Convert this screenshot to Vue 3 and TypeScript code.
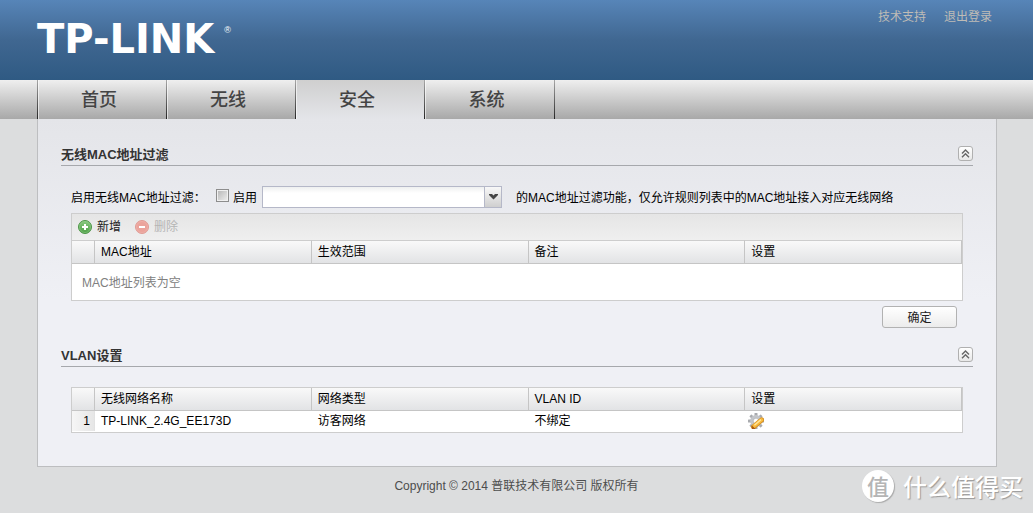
<script setup lang="ts">
import { ref } from 'vue'

const tabs: string[] = ['首页', '无线', '安全', '系统']
const activeTab = ref('安全')
const filterEnabled = ref(false)
const filterNetwork = ref('')
const filterOpen = ref(true)
const vlanOpen = ref(true)

interface VlanRow {
  name: string
  type: string
  vlan: string
}

const macColumns: string[] = ['MAC地址', '生效范围', '备注', '设置']
const vlanColumns: string[] = ['无线网络名称', '网络类型', 'VLAN ID', '设置']
const vlanRows: VlanRow[] = [{ name: 'TP-LINK_2.4G_EE173D', type: '访客网络', vlan: '不绑定' }]
const gearTeeth: number[] = [0, 45, 90, 135, 180, 225, 270, 315]
</script>

<template>
  <div class="page">
    <header class="banner">
      <div class="logo">TP-LINK<span class="reg">®</span></div>
      <div class="links">
        <a href="#support">技术支持</a>
        <a href="#logout">退出登录</a>
      </div>
    </header>

    <nav class="nav">
      <button
        v-for="tab in tabs"
        :key="tab"
        type="button"
        class="tab"
        :class="{ active: tab === activeTab }"
        @click="activeTab = tab"
      >
        {{ tab }}
      </button>
    </nav>

    <main class="panel">
      <section>
        <div class="section-head">
          <h2>无线MAC地址过滤</h2>
          <button type="button" class="collapse" aria-label="收起" @click="filterOpen = !filterOpen">
            <svg width="9" height="9" viewBox="0 0 9 9"><path d="M1 4.5 4.5 1 8 4.5M1 8.2 4.5 4.7 8 8.2" /></svg>
          </button>
        </div>
        <div v-show="filterOpen" class="section-body">
          <div class="filter-row">
            <span class="filter-label">启用无线MAC地址过滤：</span>
            <input id="filter-on" v-model="filterEnabled" type="checkbox" class="check" />
            <label for="filter-on" class="check-label">启用</label>
            <span class="combo">
              <select v-model="filterNetwork" aria-label="无线网络">
                <option value=""></option>
                <option value="guest">TP-LINK_2.4G_EE173D</option>
              </select>
              <span class="combo-arrow">
                <svg width="9" height="6" viewBox="0 0 9 6"><path d="M0 0h3l1.5 1.5L6 0h3v1L4.5 5.5 0 1z" /></svg>
              </span>
            </span>
            <span class="filter-note">的MAC地址过滤功能，仅允许规则列表中的MAC地址接入对应无线网络</span>
          </div>

          <div class="grid">
            <div class="toolbar">
              <button type="button" class="tool">
                <svg width="14" height="14" viewBox="0 0 14 14">
                  <defs>
                    <linearGradient id="add-fill" x1="0" y1="0" x2="0" y2="1">
                      <stop offset="0" stop-color="#8ccb83" />
                      <stop offset="1" stop-color="#4a9d43" />
                    </linearGradient>
                  </defs>
                  <circle cx="7" cy="7" r="6.5" fill="url(#add-fill)" stroke="#4d9447" />
                  <circle cx="7" cy="7" r="5.5" fill="none" stroke="#8fcb87" stroke-width=".6" />
                  <path d="M7 4v6M4 7h6" stroke="#fff" stroke-width="2" />
                </svg>
                新增
              </button>
              <button type="button" class="tool" disabled>
                <svg width="14" height="14" viewBox="0 0 14 14">
                  <circle cx="7" cy="7" r="6.5" fill="#eba39b" stroke="#df9c95" />
                  <circle cx="7" cy="7" r="5.5" fill="none" stroke="#f0b5ae" stroke-width=".6" />
                  <path d="M4 7h6" stroke="#fff" stroke-width="2" />
                </svg>
                删除
              </button>
            </div>
            <table class="under-toolbar">
              <thead>
                <tr>
                  <th class="num"></th>
                  <th v-for="c in macColumns" :key="c">{{ c }}</th>
                </tr>
              </thead>
              <tbody>
                <tr>
                  <td colspan="5" class="empty">MAC地址列表为空</td>
                </tr>
              </tbody>
            </table>
          </div>
          <div class="actions">
            <button type="button" class="confirm">确定</button>
          </div>
        </div>
      </section>

      <section>
        <div class="section-head vlan-head">
          <h2>VLAN设置</h2>
          <button type="button" class="collapse" aria-label="收起" @click="vlanOpen = !vlanOpen">
            <svg width="9" height="9" viewBox="0 0 9 9"><path d="M1 4.5 4.5 1 8 4.5M1 8.2 4.5 4.7 8 8.2" /></svg>
          </button>
        </div>
        <div v-show="vlanOpen" class="section-body">
          <div class="grid vlan-grid">
            <table>
              <thead>
                <tr>
                  <th class="num"></th>
                  <th v-for="c in vlanColumns" :key="c">{{ c }}</th>
                </tr>
              </thead>
              <tbody>
                <tr v-for="(row, i) in vlanRows" :key="row.name">
                  <td class="num">{{ i + 1 }}</td>
                  <td>{{ row.name }}</td>
                  <td>{{ row.type }}</td>
                  <td>{{ row.vlan }}</td>
                  <td class="edit-cell">
                    <button type="button" class="edit" aria-label="设置">
                      <svg width="16" height="16" viewBox="0 0 16 16">
                        <g fill="#a9abaf">
                          <rect
                            v-for="a in gearTeeth"
                            :key="a"
                            x="6.5"
                            y="0"
                            width="3"
                            height="4"
                            rx=".6"
                            :transform="`rotate(${a} 8 8)`"
                          />
                        </g>
                        <circle cx="8" cy="8" r="4.4" fill="#fff" stroke="#c3c5c9" stroke-width="3" />
                        <circle cx="8" cy="8" r="2.8" fill="none" stroke="#a0a2a6" stroke-width=".6" />
                        <path d="M5.5 13.8 13.7 6.9" stroke="#d08a20" stroke-width="5" stroke-linecap="round" />
                        <path d="M6.2 13 13.5 6.9" stroke="#f8b93c" stroke-width="3.6" stroke-linecap="round" />
                        <path d="M6.4 12.2 13 6.6" stroke="#ffe59a" stroke-width="1.4" />
                        <path d="M3.8 12.6 7.6 16 4 16z" fill="#a95912" />
                      </svg>
                    </button>
                  </td>
                </tr>
              </tbody>
            </table>
          </div>
        </div>
      </section>
    </main>

    <footer class="footer">Copyright © 2014 普联技术有限公司 版权所有</footer>

    <div class="stamp">
      <span class="stamp-disc">值</span>
      <span>什么值得买</span>
    </div>
  </div>
</template>

<style>
html,
body {
  background: #dcddde;
}
</style>

<style scoped>
.page {
  position: relative;
  min-height: 100vh;
  overflow: hidden;
  font: 12px/16px "Liberation Sans", Arial, "Noto Sans CJK SC", sans-serif;
  color: #000;
  background: #dcddde;
}
.page *,
.page {
  box-sizing: border-box;
}
button,
select,
input {
  margin: 0;
  padding: 0;
  font: inherit;
  color: inherit;
}
button {
  border: 0;
  background: none;
  cursor: pointer;
}
.banner {
  display: flex;
  justify-content: space-between;
  height: 80px;
  padding: 0 41px 0 37px;
  background: linear-gradient(#5785b8, #406791 50%, #2f5a83);
}
.logo {
  display: flex;
  gap: 10px;
  align-items: flex-start;
  padding-top: 19px;
  font: bold 40px/40px "DejaVu Sans", Verdana, sans-serif;
  color: #fff;
}
.reg {
  padding-top: 7px;
  font: 9px/9px "Liberation Sans", Arial, sans-serif;
}
.links {
  display: flex;
  gap: 18px;
  padding-top: 9px;
}
.links a {
  color: #bfbcb6;
  text-decoration: none;
}
.nav {
  display: flex;
  height: 39px;
  padding-left: 37px;
  background: linear-gradient(#efefef, #a8a8a8);
}
.tab {
  width: 129px;
  padding: 1px 6px 0 0;
  border-style: solid;
  border-width: 0 0 0 1px;
  border-image: linear-gradient(#aaa, #222) 1;
  box-shadow: inset 1px 0 rgba(255, 255, 255, 0.6);
  font: 500 18px/38px "Liberation Sans", "Noto Sans CJK SC", sans-serif;
  color: #444;
}
.tab:last-child {
  width: 131px;
  border-width: 0 1px;
}
.tab.active {
  background: linear-gradient(#cfcfcf, #e4e5e9);
}
.panel {
  margin: 0 36px 0 37px;
  padding: 22px 23px 33px;
  border: 1px solid #bdbec0;
  border-top: 0;
  background: linear-gradient(#e4e5e9, #eff0f5 180px);
}
.section-head {
  display: flex;
  align-items: center;
  justify-content: space-between;
  height: 25px;
  border-bottom: 1px solid #a6a8ac;
}
h2 {
  margin: 0;
  padding-top: 3px;
  font-size: 13px;
  line-height: 21px;
  color: #333;
}
.collapse {
  display: flex;
  align-items: center;
  justify-content: center;
  width: 15px;
  height: 15px;
  border: 1px solid #b0b0b0;
  border-radius: 3px;
  background: linear-gradient(#fff, #e8e8e8);
}
.collapse svg {
  fill: none;
  stroke: #666;
  stroke-width: 1.4;
}
.section-body {
  padding: 20px 10px 0;
}
.filter-row {
  display: flex;
  align-items: center;
  height: 22px;
  margin-bottom: 5px;
  white-space: nowrap;
}
.filter-label,
.check-label,
.filter-note {
  padding-top: 2px;
}
.filter-label {
  width: 145px;
}
.check {
  appearance: none;
  width: 13px;
  height: 13px;
  margin-bottom: 3px;
  border: 1px solid #8d8d8d;
  background: linear-gradient(135deg, #b4b4b4, #f0f0f0);
  box-shadow: inset 0 0 0 1px #f0f0f0;
}
.check:checked {
  background: #5785b8;
}
.check-label {
  width: 29px;
  margin-left: 4px;
}
.combo {
  position: relative;
  width: 240px;
  height: 22px;
  margin-right: 14px;
}
.combo select {
  appearance: none;
  display: block;
  width: 100%;
  height: 22px;
  padding: 0 22px 0 4px;
  border: 1px solid #b5b8c8;
  border-radius: 0;
  background: linear-gradient(#eef0f0, #fff 6px);
}
.combo-arrow {
  position: absolute;
  top: 1px;
  right: 1px;
  display: flex;
  align-items: center;
  justify-content: center;
  width: 17px;
  height: 20px;
  border-left: 1px solid #b5b8c8;
  background: linear-gradient(#f8f8f8, #cfcfcf);
  pointer-events: none;
}
.combo-arrow svg {
  fill: #444;
}
.grid {
  border: 1px solid #cdcdcd;
  background: #fff;
}
.toolbar {
  display: flex;
  gap: 14px;
  height: 26px;
  padding-left: 6px;
  background: linear-gradient(#e5e5e5, #efefef);
}
.tool {
  display: flex;
  align-items: center;
  gap: 5px;
  color: #222;
}
.tool:disabled {
  color: #b5b5b5;
}
table {
  width: 100%;
  table-layout: fixed;
  border-collapse: separate;
  border-spacing: 0;
}
th {
  height: 23px;
  padding: 0 6px;
  border-right: 1px solid #c5c5c5;
  border-bottom: 1px solid #c5c5c5;
  background: linear-gradient(#f9f9f9, #e2e3e5);
  font-weight: normal;
  text-align: left;
}
.under-toolbar th {
  height: 24px;
  border-top: 1px solid #cdcdcd;
}
th.num {
  width: 23px;
}
td {
  height: 20px;
  padding: 0 6px;
}
td.num {
  padding: 0 4px 0 0;
  border-right: 1px solid #e2e2e2;
  background: linear-gradient(90deg, #f6f6f6, #e6e6e6);
  text-align: right;
}
td.empty {
  height: 36px;
  padding: 2px 10px 0;
  color: #808080;
}
td.edit-cell {
  padding: 0 3px;
}
.edit {
  display: block;
  width: 16px;
  height: 16px;
}
.edit svg {
  display: block;
  fill: none;
}
.actions {
  display: flex;
  justify-content: flex-end;
  padding: 5px 6px 0;
}
.confirm {
  width: 75px;
  height: 22px;
  padding-top: 1px;
  border: 1px solid #b2b2b2;
  border-radius: 3px;
  background: linear-gradient(#fff, #ececec);
  color: #222;
}
.vlan-head {
  margin-top: 14px;
}
.vlan-grid {
  padding-bottom: 1px;
}
.footer {
  padding-top: 11px;
  text-align: center;
  color: #4d4d4d;
}
.stamp {
  position: absolute;
  right: 10px;
  bottom: 10px;
  display: flex;
  align-items: center;
  gap: 9px;
  font: 500 24px/34px "Noto Sans CJK SC", sans-serif;
  color: #fff;
  text-shadow: 1px 1px 1px #999;
  pointer-events: none;
}
.stamp-disc {
  width: 32px;
  height: 32px;
  border-radius: 50%;
  background: #fff;
  box-shadow: 1px 1px 1px #aaa;
  font-size: 22px;
  line-height: 31px;
  text-align: center;
  color: #b5b5b5;
  text-shadow: none;
}
</style>
